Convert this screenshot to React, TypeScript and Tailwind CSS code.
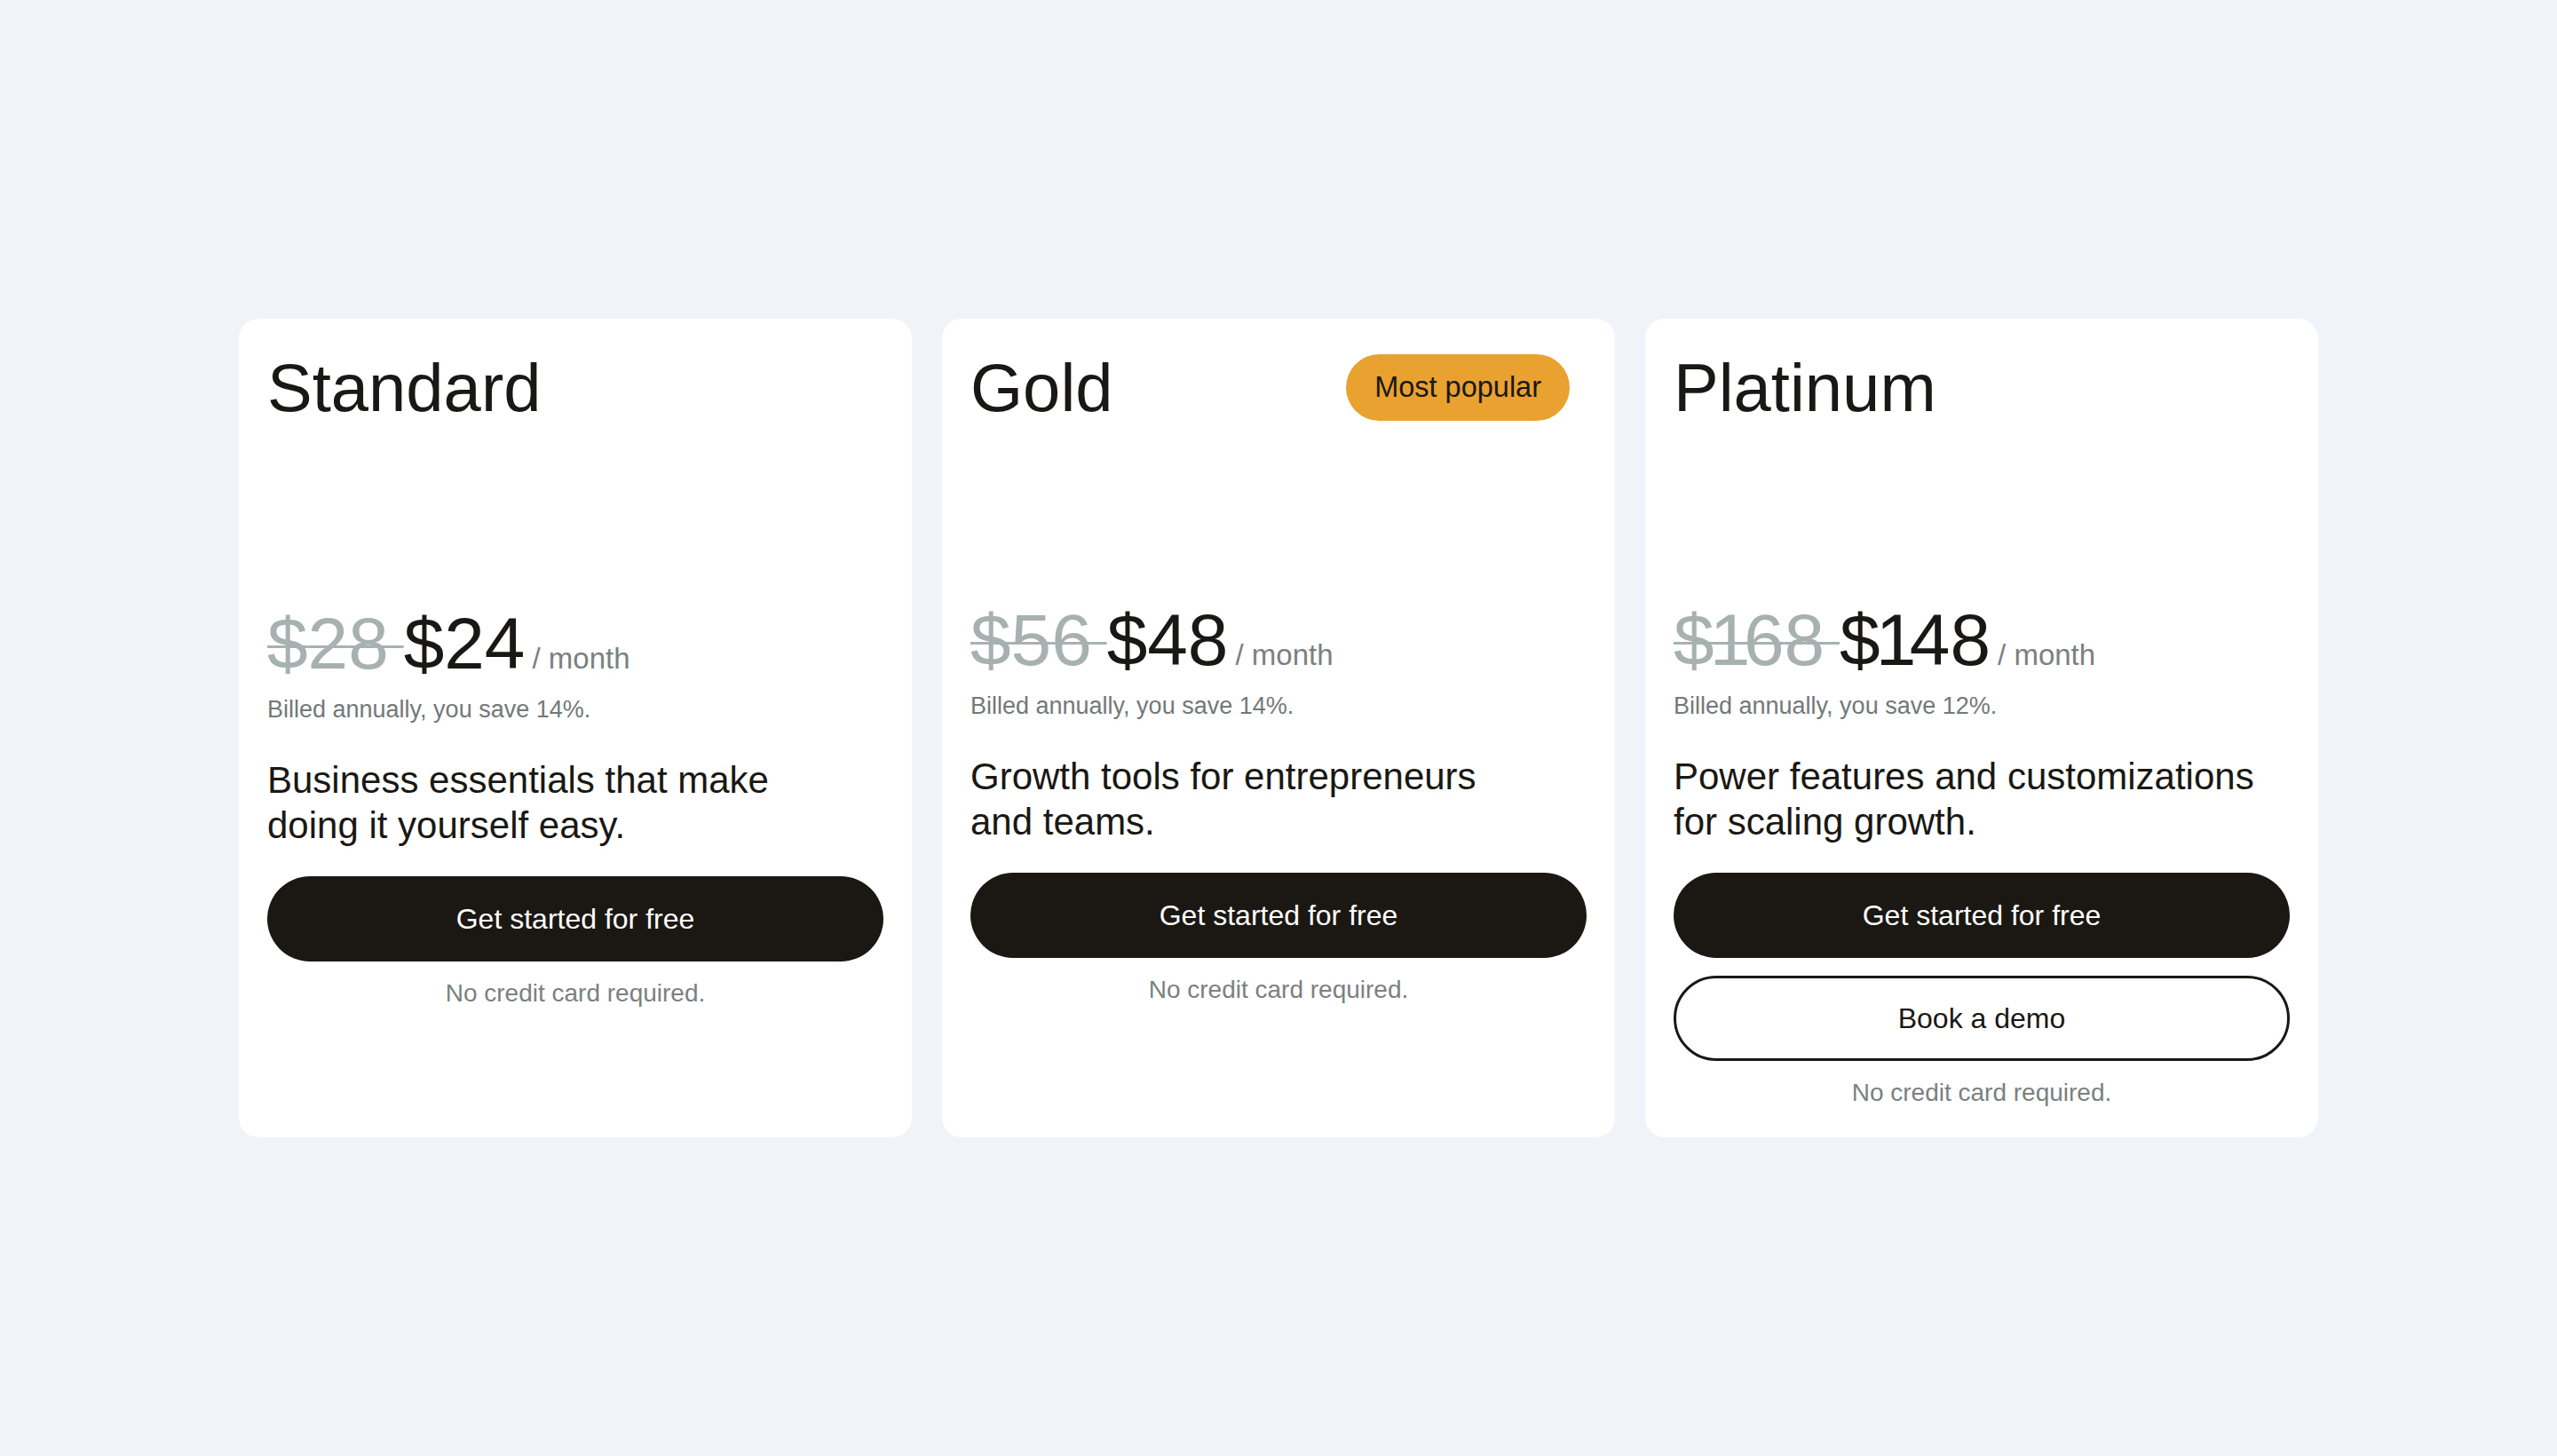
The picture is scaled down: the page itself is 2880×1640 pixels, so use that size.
type Plan = {
  name: string;
  oldPrice: string;
  price: string;
  save: string;
  blurb: string[];
  popular?: boolean;
  demo?: boolean;
  shift: string;
};

const plans: Plan[] = [
  {
    name: "Standard",
    oldPrice: "$28",
    price: "$24",
    save: "14%",
    blurb: ["Business essentials that make", "doing it yourself easy."],
    shift: "mt-[210px]",
  },
  {
    name: "Gold",
    oldPrice: "$56",
    price: "$48",
    save: "14%",
    blurb: ["Growth tools for entrepreneurs", "and teams."],
    popular: true,
    shift: "mt-[206px]",
  },
  {
    name: "Platinum",
    oldPrice: "$168",
    price: "$148",
    save: "12%",
    blurb: ["Power features and customizations", "for scaling growth."],
    demo: true,
    shift: "mt-[206px]",
  },
];

// the reference face has a narrow "1": shave the advance of the 1 and of
// the glyph before it, with letter-spacing so no boxes overlap
function Digits({ value }: { value: string }) {
  const chars = value.split("");
  return (
    <>
      {chars.map((ch, i) => {
        if (ch === "1") {
          return (
            <span key={i} className="tracking-[-0.09em]">
              1
            </span>
          );
        }
        if (chars[i + 1] === "1") {
          return (
            <span key={i} className="tracking-[-0.06em]">
              {ch}
            </span>
          );
        }
        return <span key={i}>{ch}</span>;
      })}
    </>
  );
}

function PlanCard({ plan }: { plan: Plan }) {
  return (
    <div className="flex w-[758px] flex-col rounded-[22px] bg-white px-8 pb-[30px] pt-10">
      <div className="flex items-center justify-between">
        <h2 className="text-[76px] font-normal leading-[75px] text-[#1a1814]">
          {plan.name}
        </h2>
        {plan.popular && (
          <span className="mr-[19px] flex h-[75px] items-center rounded-full bg-[#e9a130] px-[32px] text-[32.5px] text-[#1a1814]">
            Most popular
          </span>
        )}
      </div>

      <div className={`${plan.shift} flex items-baseline`}>
        <span className="text-[82px] leading-none text-[#1a1814]">
          <span className="text-[#a7b1b0] line-through decoration-[#a7b1b0] decoration-[3px]">
            <Digits value={plan.oldPrice} />
            <span className="tracking-[-6px]">&nbsp;</span>
          </span>
          <Digits value={plan.price} />
        </span>
        <span className="ml-2 text-[33px] leading-none text-[#7b8080]">
          / month
        </span>
      </div>
      <p className="mt-[15px] text-[27px] leading-[36px] text-[#737878]">
        Billed annually, you save {plan.save}.
      </p>

      <p className="mt-9 text-[42px] leading-[51px] text-[#1a1814]">
        {plan.blurb[0]}
        <br />
        {plan.blurb[1]}
      </p>

      <button className="mt-8 flex h-[96px] w-full items-center justify-center rounded-full bg-[#1b1813] text-[32px] text-white">
        Get started for free
      </button>
      {plan.demo && (
        <button className="mt-5 flex h-[96px] w-full items-center justify-center rounded-full border-[3px] border-[#1b1813] bg-white text-[32px] text-[#1a1814]">
          Book a demo
        </button>
      )}
      <p className="mt-4 text-center text-[28px] leading-[40px] text-[#7b8080]">
        No credit card required.
      </p>
    </div>
  );
}

export default function App() {
  return (
    <div
      className="flex min-h-screen items-center justify-center bg-[#f0f4f8]"
      style={{ fontFamily: '"Liberation Sans", Arial, sans-serif' }}
    >
      <div className="flex items-stretch gap-[34px]">
        {plans.map((plan) => (
          <PlanCard key={plan.name} plan={plan} />
        ))}
      </div>
    </div>
  );
}
